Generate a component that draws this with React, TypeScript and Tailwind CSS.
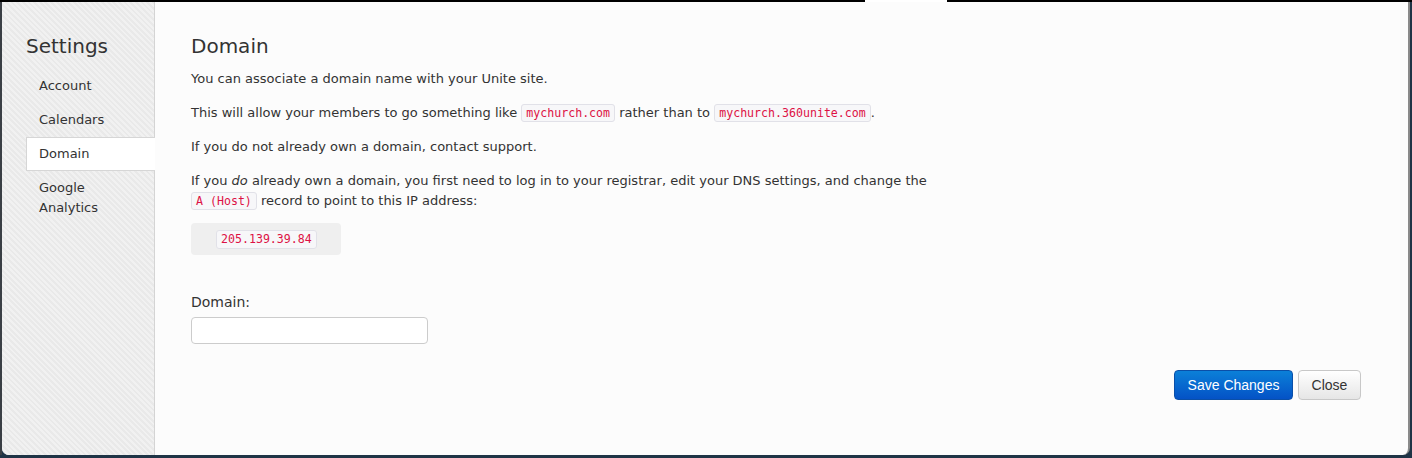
import React from "react";

const codeCls =
  "font-['DejaVu_Sans_Mono',monospace] text-[11.6px] leading-[15px] text-[#dd1144] bg-[#f7f7f9] border border-[#e1e1e8] rounded-[3px] px-[4px] py-[1px]";

export default function App() {
  return (
    <div className="w-[1412px] h-[458px] bg-[#1f3446] flex flex-col font-['DejaVu_Sans',sans-serif] text-[#333333] overflow-hidden">
      <div className="h-[2px] flex bg-black shrink-0">
        <div className="w-[865px]" />
        <div className="w-[82px] bg-white" />
      </div>
      <div className="flex-1 flex pb-[3px]">
        <div className="w-[2px] bg-[#3a3f45]" />
        <div className="flex-1 flex bg-[#fcfcfc] rounded-b-[7px] overflow-hidden border-r-[2px] border-[#8a8a8a]">
          <div className="w-[153px] shrink-0 border-r border-[#d4d4d4] bg-[repeating-linear-gradient(45deg,#f1f1f1_0px,#f1f1f1_2px,#e9e9e9_2px,#e9e9e9_4px)] pl-[24px] pt-[29px]">
            <div className="text-[20px] leading-[30px] text-[#333]">Settings</div>
            <div className="mt-[8px] flex flex-col text-[13px]">
              <div className="h-[34px] flex items-center pl-[13px]">Account</div>
              <div className="h-[34px] flex items-center pl-[13px]">Calendars</div>
              <div className="h-[34px] flex items-center pl-[12px] bg-white border border-r-0 border-[#d6d6d6] -mr-[1px]">Domain</div>
              <div className="pl-[13px] pt-[7px] leading-[20px]">Google<br />Analytics</div>
            </div>
          </div>
          <div className="flex-1 flex flex-col pl-[36px] pr-[47px] pt-[29px] text-[13px] leading-[20px]">
            <div className="text-[20px] leading-[30px]">Domain</div>
            <p className="mt-[8px]">You can associate a domain name with your Unite site.</p>
            <p className="mt-[14px]">
              This will allow your members to go something like <code className={codeCls}>mychurch.com</code> rather than to{" "}
              <code className={codeCls}>mychurch.360unite.com</code>.
            </p>
            <p className="mt-[14px]">If you do not already own a domain, contact support.</p>
            <p className="mt-[14px] w-[800px]">
              If you <em>do</em> already own a domain, you first need to log in to your registrar, edit your DNS settings, and change the
              <br />
              <code className={codeCls}>A (Host)</code> record to point to this IP address:
            </p>
            <div className="mt-[12px] w-[150px] h-[32px] bg-[#efefef] rounded-[4px] flex items-center pl-[25px]">
              <code className={codeCls}>205.139.39.84</code>
            </div>
            <label className="mt-[37px] text-[14px] leading-[20px]">Domain:</label>
            <input className="mt-[5px] w-[237px] h-[27px] border border-[#cccccc] rounded-[4px] bg-white" />
            <div className="mt-[26px] flex justify-end gap-[5px]">
              <button className="w-[119px] h-[30px] rounded-[4px] border border-[#0a4fa8] bg-[linear-gradient(#0b80d8,#0452c6)] text-white text-[14px] font-['Liberation_Sans',sans-serif]">
                Save Changes
              </button>
              <button className="w-[63px] h-[30px] rounded-[4px] border border-[#c8c8c8] bg-[linear-gradient(#ffffff,#e6e6e6)] text-[#333] text-[14px] font-['Liberation_Sans',sans-serif]">
                Close
              </button>
            </div>
          </div>
        </div>
        <div className="w-[2px] bg-[#1f3446]" />
      </div>
    </div>
  );
}
